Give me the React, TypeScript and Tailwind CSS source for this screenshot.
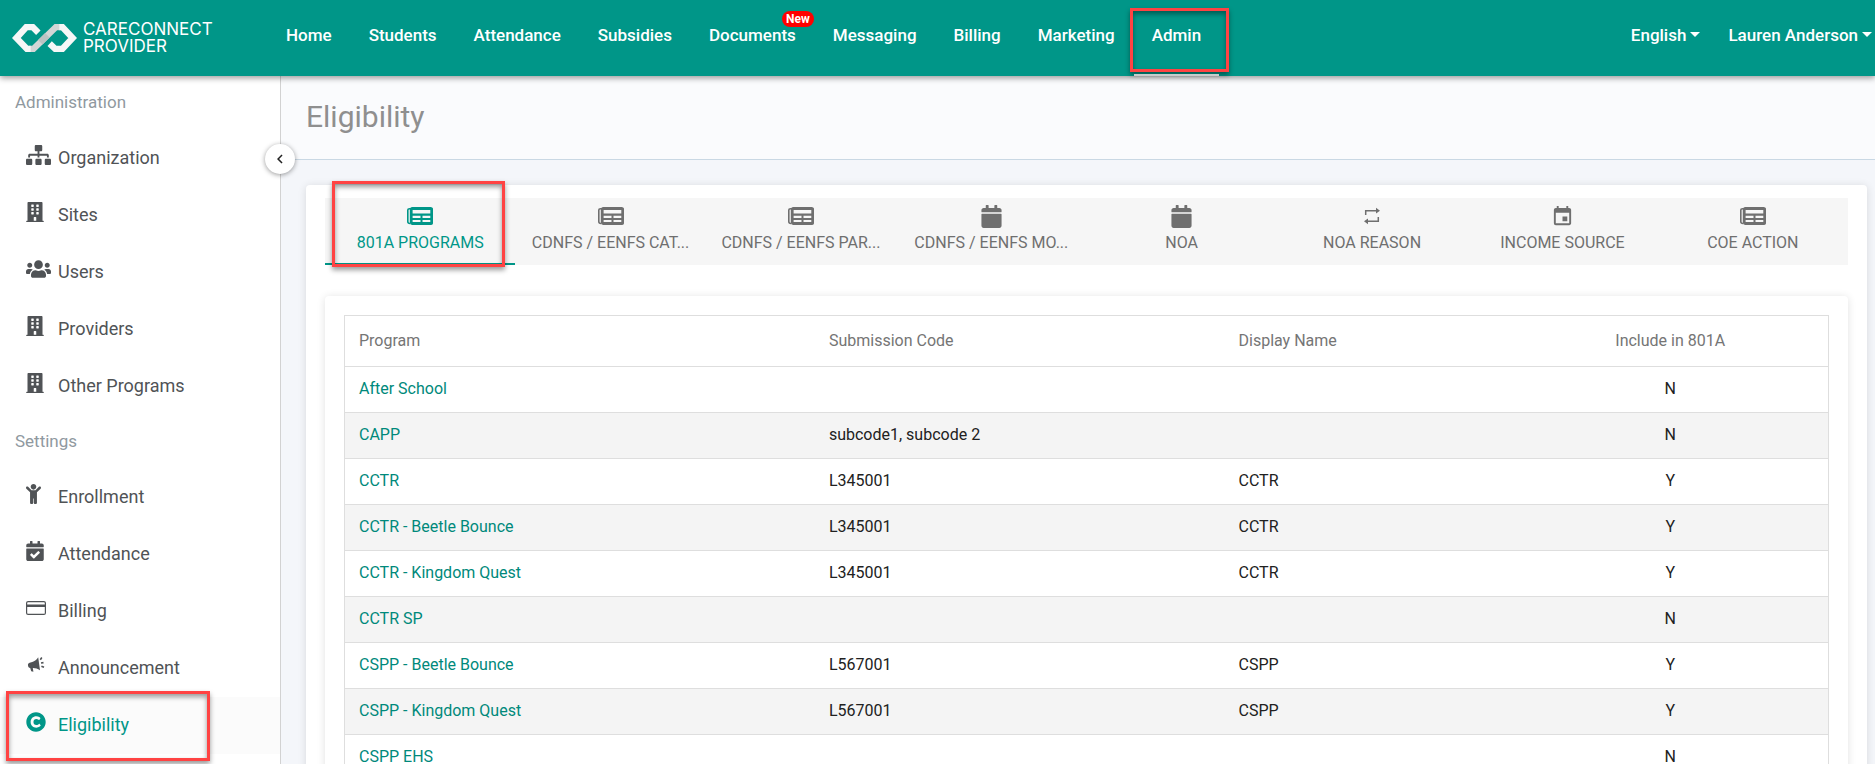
import React, { useState } from 'react';
import {
  FaBuilding,
  FaCalendar,
  FaCalendarCheck,
  FaChild,
  FaCopyright,
  FaSitemap,
  FaUsers,
} from 'react-icons/fa';
import { MdChevronLeft, MdEvent } from 'react-icons/md';

const CardIcon: React.FC = () => (
  <svg className="w-5" viewBox="0 0 20 20" fill="none">
    <rect x="0.6" y="3.6" width="18.800" height="12.800" rx="1.500" stroke="currentColor" strokeWidth="1.200" />
    <rect x="1" y="6.500" width="18" height="2.500" fill="currentColor" />
  </svg>
);

const MegaphoneIcon: React.FC = () => (
  <svg className="w-5" viewBox="0 0 20 20" fill="currentColor">
    <path d="M12.2 2.2 14 15.2C11.600 13.600 9.300 12.800 6.800 12.900L7.400 16.800 5.200 16.200 4.200 13.100C2.800 13 2.200 12 2 10.600 1.800 9 2.300 8.100 3.600 7.700L6.200 7C8.800 6.200 10.700 4.600 12.200 2.200Z" />
    <path d="M14.300 4.700 15.800 2.500M15 8 17.500 7.600M15.400 11.200 18 12.300" stroke="currentColor" strokeWidth="1.6" fill="none" />
  </svg>
);

const RepeatIcon: React.FC = () => (
  <svg className="w-[18px] h-[18px]" viewBox="0 0 18 18" fill="none">
    <path d="M2.700 8V3.700H14M15.300 10V14.300H4" stroke="currentColor" strokeWidth="1.5" />
    <path d="M13 0.800 17 3.700 13 6.600ZM5 11.400 1 14.300 5 17.200Z" fill="currentColor" />
  </svg>
);

const NewspaperIcon: React.FC = () => (
  <svg className="w-[26px] h-[18px]" viewBox="0 0 26 18" fill="none" stroke="currentColor">
    <path d="M4 1.700H2.500Q0.800 1.700 0.800 3V14.500Q0.800 16.500 3 16.500" strokeWidth="1.600" />
    <rect x="4.200" y="1.500" width="20.500" height="15" rx="1" strokeWidth="2.800" />
    <path d="M4 7.600H25M4 12H25" strokeWidth="2.200" />
    <path d="M14.500 8V16" strokeWidth="2" />
  </svg>
);

const Logo: React.FC = () => (
  <svg className="w-[65px] h-[28px]" viewBox="36 72 195 84" fill="none" strokeWidth="19">
    <path d="M88 147H100L168 81H182" stroke="#d3d6d6" />
    <path d="M115 98 98 81H79L49 114 81 147H92" stroke="#f6f7f7" />
    <path d="M121 127 142 106" stroke="#bcc3c3" />
    <path d="M178 81H187L218 114 187 147H166L149 131" stroke="#f6f7f7" />
  </svg>
);

const navItems = [
  'Home',
  'Students',
  'Attendance',
  'Subsidies',
  'Documents',
  'Messaging',
  'Billing',
  'Marketing',
  'Admin',
];

const administration = [
  { label: 'Organization', icon: <FaSitemap className="w-[25px]" /> },
  { label: 'Sites', icon: <FaBuilding className="w-[18px]" /> },
  { label: 'Users', icon: <FaUsers className="w-[25px]" /> },
  { label: 'Providers', icon: <FaBuilding className="w-[18px]" /> },
  { label: 'Other Programs', icon: <FaBuilding className="w-[18px]" /> },
];

const settings = [
  { label: 'Enrollment', icon: <FaChild className="w-[15px]" /> },
  { label: 'Attendance', icon: <FaCalendarCheck className="w-[18px]" /> },
  { label: 'Billing', icon: <CardIcon /> },
  { label: 'Announcement', icon: <MegaphoneIcon /> },
  { label: 'Eligibility', icon: <FaCopyright className="w-5" /> },
];

const tabs = [
  { label: '801A PROGRAMS', icon: <NewspaperIcon /> },
  { label: 'CDNFS / EENFS CAT...', icon: <NewspaperIcon /> },
  { label: 'CDNFS / EENFS PAR...', icon: <NewspaperIcon /> },
  { label: 'CDNFS / EENFS MO...', icon: <FaCalendar /> },
  { label: 'NOA', icon: <FaCalendar /> },
  { label: 'NOA REASON', icon: <RepeatIcon /> },
  { label: 'INCOME SOURCE', icon: <MdEvent /> },
  { label: 'COE ACTION', icon: <NewspaperIcon /> },
];

const programs = [
  { name: 'After School', code: '', display: '', include: 'N' },
  { name: 'CAPP', code: 'subcode1, subcode 2', display: '', include: 'N' },
  { name: 'CCTR', code: 'L345001', display: 'CCTR', include: 'Y' },
  { name: 'CCTR - Beetle Bounce', code: 'L345001', display: 'CCTR', include: 'Y' },
  { name: 'CCTR - Kingdom Quest', code: 'L345001', display: 'CCTR', include: 'Y' },
  { name: 'CCTR SP', code: '', display: '', include: 'N' },
  { name: 'CSPP - Beetle Bounce', code: 'L567001', display: 'CSPP', include: 'Y' },
  { name: 'CSPP - Kingdom Quest', code: 'L567001', display: 'CSPP', include: 'Y' },
  { name: 'CSPP EHS', code: '', display: '', include: 'N' },
];

// Red frame drawn over the item it is placed in
const Highlight: React.FC<{ className: string }> = ({ className }) => (
  <span
    className={`absolute z-20 pointer-events-none border-3 border-[#ff4343] shadow-[0_3px_5px_rgba(0,0,0,0.4),inset_0_3px_5px_rgba(0,0,0,0.4)] ${className}`}
  />
);

const Caret: React.FC = () => (
  <span className="mb-[2px] border-x-5 border-t-5 border-x-transparent border-t-white" />
);

type SideItem = { label: string; icon: React.ReactNode };

const SideSection: React.FC<{ title: string; items: SideItem[] }> = ({ title, items }) => (
  <div>
    <h2 className="h-[54px] flex items-center pl-[15px] text-[17px] text-[#90999f]">{title}</h2>
    <ul>
      {items.map((item) => (
        <li key={item.label} className="relative">
          <a
            href="#"
            className={`flex items-center h-[57px] pb-px pl-[26px] text-lg ${
              item.label === 'Eligibility' ? 'bg-[#fbfbfb] text-[#009688]' : 'text-[#505356]'
            }`}
          >
            <span className="w-8 pb-[6px] [&>svg]:h-5">{item.icon}</span>
            {item.label}
          </a>
          {item.label === 'Eligibility' && <Highlight className="left-[6px] -top-[6px] w-[204px] h-[70px]" />}
        </li>
      ))}
    </ul>
  </div>
);

const App: React.FC = () => {
  const [activeTab, setActiveTab] = useState<string>('801A PROGRAMS');

  return (
    <div className="flex flex-col h-screen overflow-hidden bg-[#f4f6fa] font-['Roboto','Liberation_Sans',sans-serif]">
      {/* Top bar */}
      <header className="relative z-10 flex shrink-0 h-[76px] bg-[#009688] text-white shadow-[0_2px_6px_rgba(0,0,0,0.4)]">
        <a href="#" className="flex items-center gap-[6px] w-[268px] pl-3">
          <Logo />
          <span className="font-['Inter',sans-serif] text-[17px] leading-[17px]">
            CARECONNECT
            <br />
            PROVIDER
          </span>
        </a>
        <nav className="flex gap-px text-[17px] font-medium">
          {navItems.map((item) => (
            <a key={item} href="#" className="relative px-[18px] pt-[23px]">
              {item}
              {item === 'Documents' && (
                <span className="absolute right-0 top-[11px] h-4 px-1 rounded-lg bg-[#ff0000] text-xs leading-4 font-bold">
                  New
                </span>
              )}
              {item === 'Admin' && (
                <>
                  <Highlight className="-left-1 -right-[10px] top-2 h-16" />
                  <span className="absolute inset-x-0 bottom-0 z-30 h-[2px] bg-[#c8cccc]" />
                </>
              )}
            </a>
          ))}
        </nav>
        <div className="flex items-start gap-7 ml-auto pt-[23px] pr-[3px] text-[17px] font-medium">
          <button className="flex items-center gap-1">
            English
            <Caret />
          </button>
          <button className="flex items-center gap-1">
            Lauren Anderson
            <Caret />
          </button>
        </div>
      </header>

      <div className="flex flex-1 min-h-0">
        {/* Sidebar */}
        <aside className="relative shrink-0 w-[281px] bg-white border-r border-[#d2d2d2]">
          <SideSection title="Administration" items={administration} />
          <SideSection title="Settings" items={settings} />
          <button
            aria-label="Collapse menu"
            className="absolute -right-[15px] top-[68px] z-10 flex items-center justify-center w-[30px] h-[30px] rounded-full bg-white text-[#222] shadow-[0_1px_5px_rgba(0,0,0,0.4)]"
          >
            <MdChevronLeft className="w-[18px] h-[18px]" />
          </button>
        </aside>

        {/* Content */}
        <main className="flex-1 min-w-0">
          <div className="h-[84px] pt-[18px] pl-[25px] bg-[#fafbfd] border-b border-[#c9d8e4]">
            <h1 className="text-[30px] leading-[46px] text-[#8f8f8f]">Eligibility</h1>
          </div>
          <div className="mt-[25px] ml-[25px] mr-2 px-[19px] pt-[13px] pb-5 rounded bg-white shadow-[0_1px_8px_rgba(0,0,0,0.12)]">
            <div role="tablist" className="grid grid-cols-8 bg-[#f6f6f6]">
              {tabs.map((tab) => (
                <div key={tab.label} className="relative">
                  <button
                    role="tab"
                    aria-selected={activeTab === tab.label}
                    onClick={() => setActiveTab(tab.label)}
                    className={`flex flex-col items-center gap-[3px] w-full h-[67px] pt-[6px] border-b-2 ${
                      activeTab === tab.label ? 'border-[#009688] text-[#009688]' : 'border-transparent text-[#6f6f6f]'
                    }`}
                  >
                    <span className="flex items-center h-6 text-[23px]">{tab.icon}</span>
                    <span className="whitespace-nowrap text-base">{tab.label}</span>
                  </button>
                  {tab.label === '801A PROGRAMS' && (
                    <Highlight className="left-[7px] right-[10px] -top-[17px] h-[86px]" />
                  )}
                </div>
              ))}
            </div>

            <div className="mt-[31px] p-[19px] rounded bg-white shadow-[0_1px_8px_rgba(0,0,0,0.12)]">
              <table className="w-full table-fixed border border-[#dedede] text-base text-[#212121]">
                <thead>
                  <tr className="h-[51px] text-left text-[#757575]">
                    <th className="w-[31.7%] px-[14px] font-normal">Program</th>
                    <th className="w-[27.6%] px-[14px] font-normal">Submission Code</th>
                    <th className="px-[14px] font-normal">Display Name</th>
                    <th className="w-[21.3%] px-[14px] font-normal text-center">Include in 801A</th>
                  </tr>
                </thead>
                <tbody>
                  {programs.map((program) => (
                    <tr key={program.name} className="h-[46px] border-t border-[#dedede] even:bg-[#f4f4f4]">
                      <td className="px-[14px] pb-[2px]">
                        <a href="#" className="text-[#00897b]">
                          {program.name}
                        </a>
                      </td>
                      <td className="px-[14px] pb-[2px]">{program.code}</td>
                      <td className="px-[14px] pb-[2px]">{program.display}</td>
                      <td className="px-[14px] pb-[2px] text-center">{program.include}</td>
                    </tr>
                  ))}
                </tbody>
              </table>
            </div>
          </div>
        </main>
      </div>
    </div>
  );
};

export default App;
